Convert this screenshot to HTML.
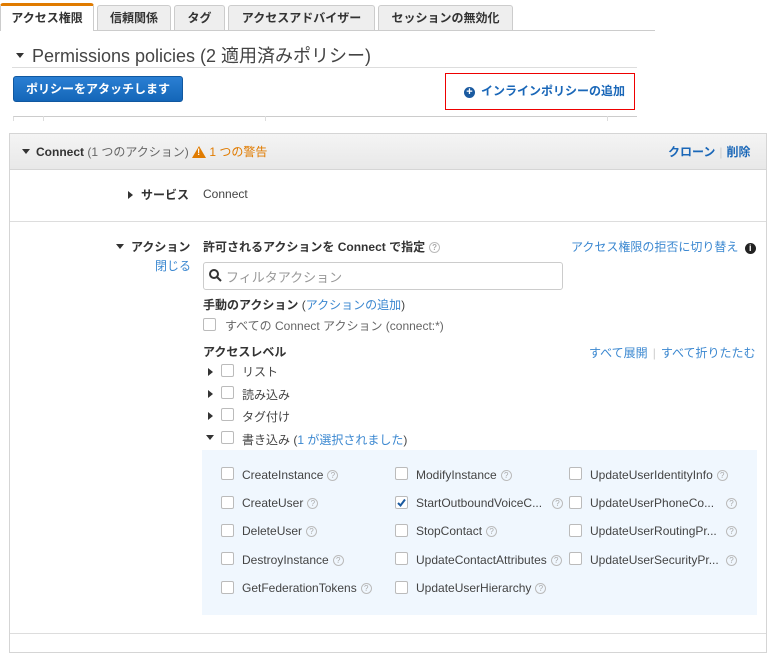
<!DOCTYPE html>
<html><head><meta charset="utf-8"><style>
*{box-sizing:border-box;margin:0;padding:0}
html,body{width:775px;height:639px}
body{background:#fff;font-family:"Liberation Sans","Noto Sans CJK JP",sans-serif;font-size:12px;color:#444;position:relative;overflow:hidden}
.a{position:absolute;white-space:nowrap}
.tab{position:absolute;top:5px;height:25px;background:#eee;border:1px solid #ccc;border-bottom:none;font-weight:bold;font-size:12px;color:#333;text-align:center;line-height:24px;border-radius:3px 3px 0 0}
.blue{color:#1a67b8}
.cb{position:absolute;width:13px;height:13px;border:1px solid #bbb;border-radius:2px;background:#fff}
.q{display:inline-block;width:11px;height:11px;border:1px solid #bbb;border-radius:50%;font-size:8px;line-height:9px;text-align:center;color:#aaa;vertical-align:1px;margin-left:4px}
.tri-d{display:inline-block;width:0;height:0;border-left:4px solid transparent;border-right:4px solid transparent;border-top:5px solid #333;vertical-align:2px}
.tri-r{display:inline-block;width:0;height:0;border-top:4px solid transparent;border-bottom:4px solid transparent;border-left:5px solid #333;vertical-align:0}
.it{position:absolute;font-size:12px;color:#444}
</style></head><body>
<div class="a" style="left:0;top:30px;width:655px;border-top:1px solid #ccc"></div>
<div class="tab" style="left:0;width:94px;background:#fff;border-top:3px solid #e07b00;top:3px;height:28px;line-height:25px">アクセス権限</div>
<div class="tab" style="left:97px;width:74px">信頼関係</div>
<div class="tab" style="left:174px;width:51px">タグ</div>
<div class="tab" style="left:228px;width:147px">アクセスアドバイザー</div>
<div class="tab" style="left:378px;width:135px">セッションの無効化</div>
<div class="a" style="left:16px;top:42px;font-size:18px;color:#444"><span class="tri-d" style="vertical-align:4px;margin-right:8px"></span>Permissions policies (2 適用済みポリシー)</div>
<div class="a" style="left:12px;top:67px;width:625px;border-top:1px solid #ddd"></div>
<div class="a" style="left:13px;top:76px;width:170px;height:26px;background:linear-gradient(#2a7fd3,#1466b8);border:1px solid #1158a0;border-radius:3px;color:#fff;font-weight:bold;font-size:12px;line-height:24px;text-align:center">ポリシーをアタッチします</div>
<div class="a" style="left:445px;top:73px;width:190px;height:37px;border:1px solid #e00"></div>
<div class="a blue" style="left:464px;top:82px;font-weight:bold;font-size:12px"><span style="display:inline-block;width:11px;height:11px;border-radius:50%;background:#1a5aa0;color:#fff;font-size:11px;line-height:10px;text-align:center;margin-right:6px">+</span>インラインポリシーの追加</div>
<div class="a" style="left:13px;top:116px;width:624px;height:5px;border-top:1px solid #ccc;border-left:1px solid #ddd"></div>
<div class="a" style="left:43px;top:116px;height:5px;border-left:1px solid #ddd"></div>
<div class="a" style="left:265px;top:116px;height:5px;border-left:1px solid #ddd"></div>
<div class="a" style="left:607px;top:116px;height:5px;border-left:1px solid #ddd"></div>
<div class="a" style="left:9px;top:133px;width:758px;height:520px;border:1px solid #d5d5d5"></div>
<div class="a" style="left:10px;top:134px;width:756px;height:36px;background:linear-gradient(#f4f4f4,#e8e8e8);border-bottom:1px solid #d5d5d5"></div>
<div class="a" style="left:22px;top:143px;font-size:12px;color:#666"><span class="tri-d" style="margin-right:6px"></span><b style="color:#333">Connect</b> (1 つのアクション) <span style="display:inline-block;width:0;height:0;border-left:7px solid transparent;border-right:7px solid transparent;border-bottom:12px solid #e07b00;vertical-align:-2px;position:relative"><span style="position:absolute;left:-2px;top:1px;color:#fff;font-size:9px;font-weight:bold">!</span></span> <span style="color:#e07b00">1 つの警告</span></div>
<div class="a blue" style="left:668px;top:143px;font-weight:bold">クローン<span style="color:#ccc;font-weight:normal;margin:0 4px">|</span>削除</div>
<div class="a" style="left:10px;top:221px;width:756px;border-top:1px solid #ddd"></div>
<div class="a" style="left:128px;top:186px;font-weight:bold;color:#333"><span class="tri-r" style="margin-right:8px"></span>サービス</div>
<div class="a" style="left:203px;top:187px">Connect</div>
<div class="a" style="left:116px;top:238px;font-weight:bold;color:#333"><span class="tri-d" style="margin-right:7px"></span>アクション</div>
<div class="a" style="left:155px;top:257px;color:#3a87d0">閉じる</div>
<div class="a" style="left:203px;top:238px;font-weight:bold;color:#333">許可されるアクションを Connect で指定<span class="q">?</span></div>
<div class="a" style="left:571px;top:238px;color:#3a87d0">アクセス権限の拒否に切り替え <span style="display:inline-block;width:11px;height:11px;border-radius:50%;background:#222;color:#fff;font-size:9px;line-height:11px;text-align:center;font-weight:bold;margin-left:3px">i</span></div>
<div class="a" style="left:203px;top:262px;width:360px;height:28px;border:1px solid #ccc;border-radius:3px"></div>
<svg class="a" style="left:208px;top:268px" width="14" height="14"><circle cx="6" cy="6" r="4" fill="none" stroke="#333" stroke-width="2"/><line x1="9" y1="9" x2="13" y2="13" stroke="#333" stroke-width="2"/></svg>
<div class="a" style="left:226px;top:267px;font-size:13px;color:#999">フィルタアクション</div>
<div class="a" style="left:203px;top:296px;font-weight:bold;color:#333">手動のアクション <span style="font-weight:normal;color:#444">(<span style="color:#3a87d0">アクションの追加</span>)</span></div>
<div class="cb" style="left:203px;top:318px"></div>
<div class="a" style="left:225px;top:317px;color:#666">すべての Connect アクション (connect:*)</div>
<div class="a" style="left:203px;top:343px;font-weight:bold;color:#333">アクセスレベル</div>
<div class="a" style="left:589px;top:344px;color:#3a87d0">すべて展開<span style="color:#ccc;margin:0 5px">|</span>すべて折りたたむ</div>
<div class="a" style="left:208px;top:365px"><span class="tri-r"></span></div><div class="cb" style="left:221px;top:364px"></div><div class="a" style="left:242px;top:363px">リスト</div>
<div class="a" style="left:208px;top:387px"><span class="tri-r"></span></div><div class="cb" style="left:221px;top:386px"></div><div class="a" style="left:242px;top:386px">読み込み</div>
<div class="a" style="left:208px;top:409px"><span class="tri-r"></span></div><div class="cb" style="left:221px;top:408px"></div><div class="a" style="left:242px;top:408px">タグ付け</div>
<div class="a" style="left:206px;top:431px"><span class="tri-d"></span></div><div class="cb" style="left:221px;top:431px"></div><div class="a" style="left:242px;top:431px">書き込み (<span style="color:#3a87d0">1 が選択されました</span>)</div>
<div class="a" style="left:202px;top:450px;width:555px;height:165px;background:#f0f7fe"></div>
<div class="cb" style="left:221px;top:467px"></div><div class="it" style="left:242px;top:468px">CreateInstance<span class="q">?</span></div>
<div class="cb" style="left:221px;top:496px"></div><div class="it" style="left:242px;top:496px">CreateUser<span class="q">?</span></div>
<div class="cb" style="left:221px;top:524px"></div><div class="it" style="left:242px;top:524px">DeleteUser<span class="q">?</span></div>
<div class="cb" style="left:221px;top:552px"></div><div class="it" style="left:242px;top:553px">DestroyInstance<span class="q">?</span></div>
<div class="cb" style="left:221px;top:581px"></div><div class="it" style="left:242px;top:581px">GetFederationTokens<span class="q">?</span></div>
<div class="cb" style="left:395px;top:467px"></div><div class="it" style="left:416px;top:468px">ModifyInstance<span class="q">?</span></div>
<div class="cb" style="left:395px;top:496px"><svg width="11" height="11" style="position:absolute;left:0;top:0"><path d="M2 6 L4.5 8.5 L9 2.5" fill="none" stroke="#1a5aa0" stroke-width="2"/></svg></div><div class="it" style="left:416px;top:496px">StartOutboundVoiceC...</div><span class="q a" style="left:548px;top:498px">?</span>
<div class="cb" style="left:395px;top:524px"></div><div class="it" style="left:416px;top:524px">StopContact<span class="q">?</span></div>
<div class="cb" style="left:395px;top:552px"></div><div class="it" style="left:416px;top:553px">UpdateContactAttributes<span class="q">?</span></div>
<div class="cb" style="left:395px;top:581px"></div><div class="it" style="left:416px;top:581px">UpdateUserHierarchy<span class="q">?</span></div>
<div class="cb" style="left:569px;top:467px"></div><div class="it" style="left:590px;top:468px">UpdateUserIdentityInfo<span class="q">?</span></div>
<div class="cb" style="left:569px;top:496px"></div><div class="it" style="left:590px;top:496px">UpdateUserPhoneCo...</div><span class="q a" style="left:722px;top:498px">?</span>
<div class="cb" style="left:569px;top:524px"></div><div class="it" style="left:590px;top:524px">UpdateUserRoutingPr...</div><span class="q a" style="left:722px;top:526px">?</span>
<div class="cb" style="left:569px;top:552px"></div><div class="it" style="left:590px;top:553px">UpdateUserSecurityPr...</div><span class="q a" style="left:722px;top:555px">?</span>
<div class="a" style="left:10px;top:633px;width:756px;border-top:1px solid #ddd"></div>
</body></html>
